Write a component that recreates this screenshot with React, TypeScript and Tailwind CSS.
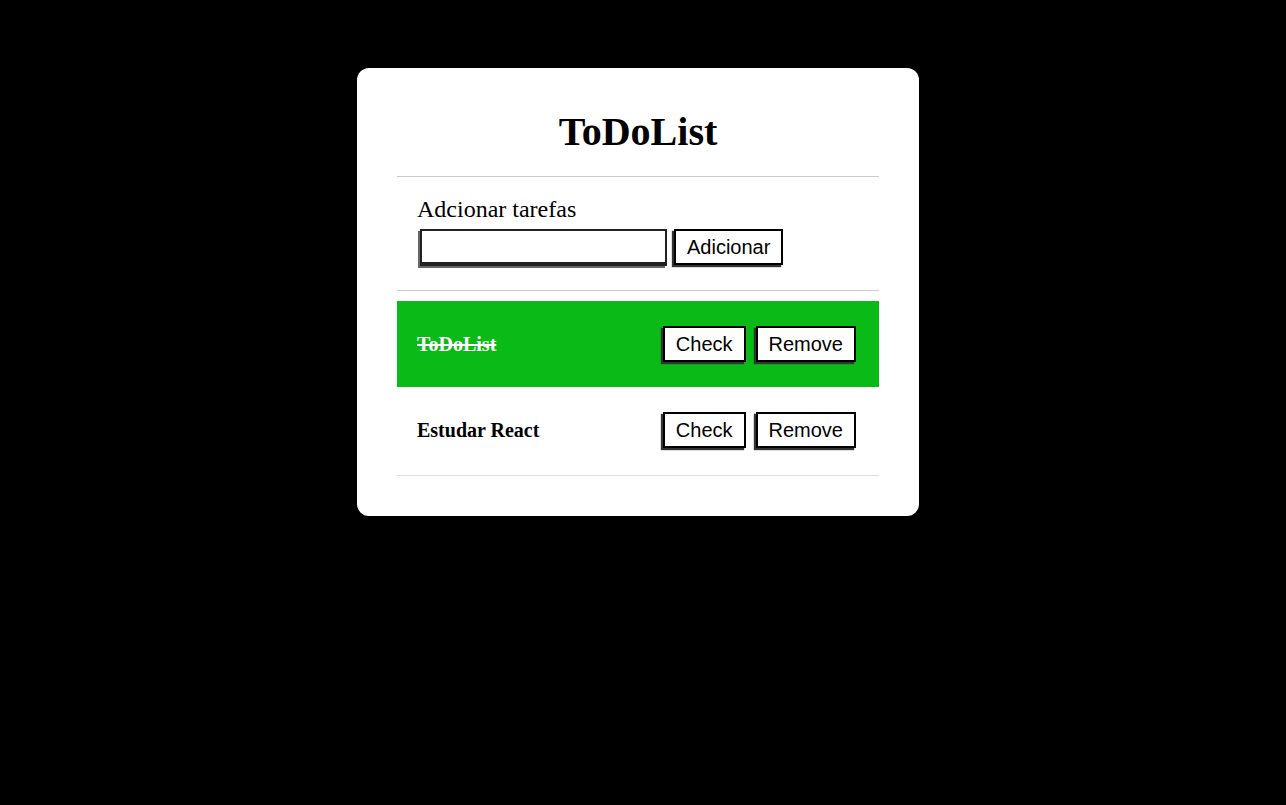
import { useState } from "react";

type Task = { id: number; text: string; done: boolean };

const serif = "font-['Liberation_Serif',serif]";
const btn =
  "bg-white border-2 border-black text-black text-[20px] font-['Liberation_Sans',Arial,sans-serif] leading-[32px] px-[11px] shadow-[-2px_2px_1px_#333]";

export default function App() {
  const [tasks, setTasks] = useState<Task[]>([
    { id: 1, text: "ToDoList", done: true },
    { id: 2, text: "Estudar React", done: false },
  ]);
  const [value, setValue] = useState("");

  const add = () => {
    if (!value.trim()) return;
    setTasks([...tasks, { id: Date.now(), text: value, done: false }]);
    setValue("");
  };

  return (
    <div className="flex min-h-screen justify-center bg-black pt-[68px] pr-[10px]">
      <div className={`h-max w-[562px] rounded-xl bg-white p-10 ${serif}`}>
        <h1 className="mt-px text-center text-[40px] leading-[46px] font-bold text-black">
          ToDoList
        </h1>
        <hr className="mt-[21px] border-[#ccc]" />

        <div className="px-5 pt-[18px] pb-[24px]">
          <div className="text-[24px] leading-[28px] text-black">Adcionar tarefas</div>
          <div className="mt-[6px] flex items-start gap-[7px] pl-[3px]">
            <input
              value={value}
              onChange={(e) => setValue(e.target.value)}
              className="h-[37px] w-[247px] border-2 border-[#222] border-b-4 bg-white px-1 text-[18px] outline-none shadow-[-2px_2px_0_#666]"
            />
            <button onClick={add} className={btn}>
              Adicionar
            </button>
          </div>
        </div>
        <hr className="border-[#ccc]" />

        <div className="mt-[10px]">
          {tasks.map((t) => (
            <div
              key={t.id}
              className={`flex h-[86px] items-center justify-between pl-5 pr-[23px] ${
                t.done ? "bg-[#0aba16]" : "bg-white"
              }`}
            >
              <span
                className={`text-[20px] font-bold ${
                  t.done ? "text-white line-through" : "text-black"
                }`}
              >
                {t.text}
              </span>
              <div className="flex gap-[10px]">
                <button
                  className={btn}
                  onClick={() =>
                    setTasks(tasks.map((x) => (x.id === t.id ? { ...x, done: !x.done } : x)))
                  }
                >
                  Check
                </button>
                <button
                  className={btn}
                  onClick={() => setTasks(tasks.filter((x) => x.id !== t.id))}
                >
                  Remove
                </button>
              </div>
            </div>
          ))}
        </div>
        <hr className="mt-[2px] border-[#ddd]" />
      </div>
    </div>
  );
}
